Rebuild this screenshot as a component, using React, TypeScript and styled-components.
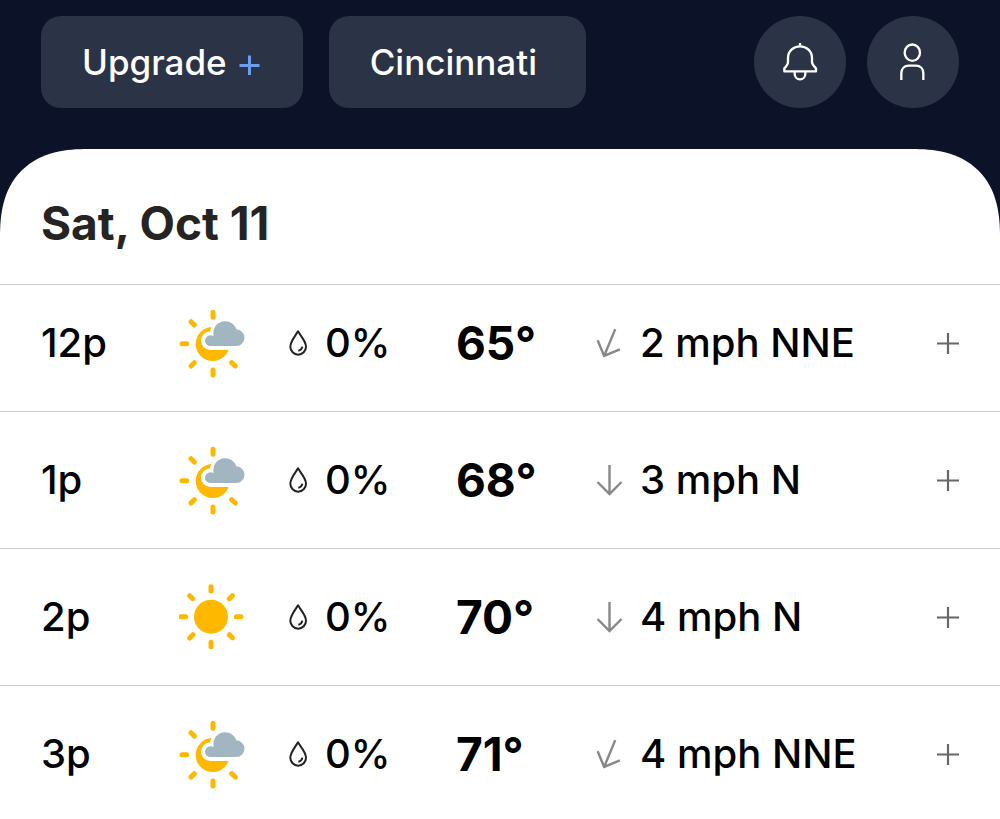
import React from "react";
import styled, { createGlobalStyle } from "styled-components";

const GlobalStyle = createGlobalStyle`
  *, *::before, *::after { box-sizing: border-box; }
  body {
    margin: 0;
    background: #0c1228;
    font-family: Inter, "Liberation Sans", sans-serif;
    -webkit-font-smoothing: antialiased;
  }
  svg { display: block; flex: none; }
`;

const Page = styled.div`
  display: flex;
  flex-direction: column;
  min-height: 100vh;
`;

const Header = styled.header`
  display: flex;
  align-items: center;
  justify-content: space-between;
  padding: 16px 41px 41px;
`;

const HeaderGroup = styled.div<{ $gap: number }>`
  display: flex;
  gap: ${(p) => p.$gap}px;
`;

const BaseButton = styled.button`
  border: 0;
  padding: 0;
  color: inherit;
  font: inherit;
  cursor: pointer;
`;

const PillButton = styled(BaseButton)<{ $endSpace?: number }>`
  display: flex;
  align-items: center;
  gap: 12px;
  height: 92px;
  padding: 0 ${(p) => p.$endSpace ?? 43}px 0 41px;
  border-radius: 20px;
  background: #2b3347;
  color: #fff;
  font-size: 35px;
  font-weight: 500;
  white-space: nowrap;
`;

const RoundButton = styled(BaseButton)`
  display: grid;
  place-items: center;
  width: 92px;
  height: 92px;
  border-radius: 50%;
  background: #2b3347;
`;

const Panel = styled.main`
  flex: 1;
  background: #fff;
  border-radius: 88px 88px 0 0;
  corner-shape: superellipse(1.3);
`;

const DayTitle = styled.h1`
  margin: 0;
  padding: 46px 41px 33px;
  border-bottom: 1px solid #cbcbcb;
  color: #252422;
  font-size: 46px;
  line-height: 56px;
  font-weight: 700;
`;

const Hours = styled.table`
  width: 100%;
  border-spacing: 0;
  color: #000;
  font-size: 40px;
  line-height: 76px;
  font-weight: 500;
  white-space: nowrap;
`;

const HourRow = styled.tr`
  > * {
    padding: 30px 0;
    border-bottom: 1px solid #cbcbcb;
    text-align: left;
    font-weight: inherit;
  }
  &:first-child > * { padding-top: 20px; }
  &:last-child > * { padding-bottom: 27px; border-bottom: 0; }
`;

const Time = styled.th`
  width: 179px;
  && { padding-left: 41px; }
`;

const Condition = styled.td`
  width: 109px;
`;

const Precip = styled.td`
  width: 168px;
`;

const Temp = styled.td`
  width: 140px;
  && { font-size: 46px; font-weight: 700; }
`;

const Wind = styled.td``;

const Expand = styled.td`
  width: 63px;
  && { padding-right: 41px; }
`;

const IconText = styled.span<{ $gap: number }>`
  display: flex;
  align-items: center;
  gap: ${(p) => p.$gap}px;
`;

const ExpandButton = styled(BaseButton)`
  display: grid;
  place-items: center;
  width: 22px;
  height: 76px;
  background: none;
`;

const UpgradePlus = () => (
  <svg width="21" height="26" viewBox="0 0 21 26" fill="none" stroke="#6d9eeb" strokeWidth="3" aria-hidden>
    <path d="M0.500 16.500H20.500M10.500 6.500V26" />
  </svg>
);

const BellIcon = () => (
  <svg width="36" height="40" viewBox="156 124 108 120" fill="none" stroke="#fff" strokeWidth="7" aria-hidden>
    <path d="M210 127V138" />
    <path d="M163 212V203C168 198 174 192 174 184V172C174 152 190 137 210 137S246 152 246 172V184C246 192 253 198 258 203V212Z" strokeLinejoin="round" />
    <path d="M194 212V219C194 229 201 236 210 236S226 229 226 219V212" />
  </svg>
);

const PersonIcon = () => (
  <svg width="28" height="40" viewBox="506 126 84 120" fill="none" stroke="#fff" strokeWidth="7" aria-hidden>
    <ellipse cx="546" cy="158" rx="23" ry="24.5" />
    <path d="M513 240V220C513 206 522 197 535 197H557C570 197 579 206 579 220V240" />
  </svg>
);

const PartlyCloudyIcon = () => (
  <svg width="68" height="69" viewBox="57 57 204 207" role="img" aria-label="Partly cloudy">
    <circle cx="158" cy="162" r="51" fill="#ffb800" />
    <g stroke="#ffb800" strokeWidth="15" strokeLinecap="round">
      <path d="M159 67V82M66 161H80M93 95L103 105M159 240V255M93 228L103 218M215 218L226 228" />
    </g>
    <g stroke="#fff" strokeWidth="24" fill="#fff">
      <path d="M151 168A16 16 0 0 1 151 136C155 136 158 135 161 134A36 36 0 0 1 230 119A24.500 24.500 0 0 1 228 168Z" />
    </g>
    <path fill="#a2b6c2" d="M151 168A16 16 0 0 1 151 136C155 136 158 137 161 138C156 114 173 94 195 94C211 94 224 104 229 118A25 25 0 0 1 228 168Z" />
  </svg>
);

const SunnyIcon = () => (
  <svg width="68" height="69" viewBox="57 57 204 207" role="img" aria-label="Sunny">
    <g transform="translate(153 158)">
      <circle r="51" fill="#ffb800" />
      <g stroke="#ffb800" strokeWidth="15" strokeLinecap="round">
        <path d="M0 -90V-77M0 77V90M-90 0H-76M76 0H90M-64 -63L-55 -54M64 -63L55 -54M-64 64L-54 54M64 63L55 54" />
      </g>
    </g>
  </svg>
);

const DropIcon = () => (
  <svg width="20" height="29" viewBox="384 117 60 87" fill="none" stroke="#222" strokeWidth="6" aria-hidden>
    <path d="M414 124C406 138 391 153 391 170A23.500 24 0 0 0 438 170C438 153 422 138 414 124Z" strokeLinejoin="round" />
    <path d="M415 182C421 181 426 177 427 170" />
  </svg>
);

const WindArrow = ({ angle }: { angle: number }) => (
  <svg width="26" height="32" viewBox="0 0 26 32" fill="none" stroke="#888" strokeWidth="2.4" overflow="visible" aria-hidden>
    <path d="M13.500 1V30M1.500 18L13.500 30L25.500 18" transform={`rotate(${angle} 13.5 16)`} />
  </svg>
);

const PlusIcon = () => (
  <svg width="22" height="22" viewBox="0 0 22 22" fill="none" stroke="#666" strokeWidth="2.2" aria-hidden>
    <path d="M0 11.500H22M11 1V22" />
  </svg>
);

type Hour = { time: string; sunny?: boolean; rain: string; temp: string; wind: string; angle: number };

const hours: Hour[] = [
  { time: "12p", rain: "0%", temp: "65°", wind: "2 mph NNE", angle: 22.5 },
  { time: "1p", rain: "0%", temp: "68°", wind: "3 mph N", angle: 0 },
  { time: "2p", sunny: true, rain: "0%", temp: "70°", wind: "4 mph N", angle: 0 },
  { time: "3p", rain: "0%", temp: "71°", wind: "4 mph NNE", angle: 22.5 },
];

export default function App() {
  return (
    <Page>
      <GlobalStyle />
      <Header>
        <HeaderGroup $gap={26}>
          <PillButton type="button">
            Upgrade <UpgradePlus />
          </PillButton>
          <PillButton type="button" $endSpace={49}>Cincinnati</PillButton>
        </HeaderGroup>
        <HeaderGroup $gap={21}>
          <RoundButton type="button" aria-label="Notifications"><BellIcon /></RoundButton>
          <RoundButton type="button" aria-label="Account"><PersonIcon /></RoundButton>
        </HeaderGroup>
      </Header>
      <Panel>
        <DayTitle>Sat, Oct 11</DayTitle>
        <Hours aria-label="Hourly forecast">
          <tbody>
            {hours.map((h) => (
              <HourRow key={h.time}>
                <Time scope="row">{h.time}</Time>
                <Condition>{h.sunny ? <SunnyIcon /> : <PartlyCloudyIcon />}</Condition>
                <Precip>
                  <IconText $gap={17}><DropIcon />{h.rain}</IconText>
                </Precip>
                <Temp>{h.temp}</Temp>
                <Wind>
                  <IconText $gap={18}><WindArrow angle={h.angle} />{h.wind}</IconText>
                </Wind>
                <Expand>
                  <ExpandButton type="button" aria-label={`Show details for ${h.time}`}><PlusIcon /></ExpandButton>
                </Expand>
              </HourRow>
            ))}
          </tbody>
        </Hours>
      </Panel>
    </Page>
  );
}
